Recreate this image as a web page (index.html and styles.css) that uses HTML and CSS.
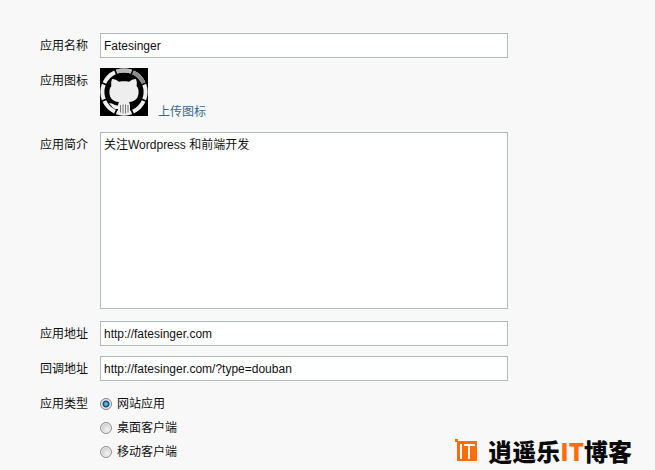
FILE: index.html
```
<!DOCTYPE html>
<html lang="zh-CN">
<head>
<meta charset="utf-8">
<title>应用设置</title>
<link rel="stylesheet" href="styles.css">
</head>
<body>
<form class="app-form">
  <div class="row">
    <label class="label" for="name">应用名称</label>
    <input class="field" id="name" type="text" value="Fatesinger">
  </div>
  <div class="row">
    <span class="label">应用图标</span>
    <div class="icon-group">
      <svg class="app-icon" viewBox="0 0 48 48" aria-hidden="true">
        <rect width="48" height="48" fill="#000"/>
        <g fill="none" stroke-width="4">
          <circle cx="24" cy="24" r="21.6" stroke="#eee" pathLength="80" stroke-dasharray="9 1" stroke-dashoffset="-5.5"/>
          <path d="M17 3.600a21.600 21.600 0 0 1 14 0" stroke="#bbb"/>
          <path d="M33.200 4.500A21.600 21.600 0 0 1 43.600 15" stroke="#888"/>
        </g>
        <path fill="#eee" d="M12 11c3 0 5 1.200 7 2.700 3.200-.6 6.800-.6 10 0 2-1.500 4-2.700 7-2.700 1 2.500 1 4.500.6 7 1.500 1.800 2 3.500 2 6 0 6.500-3.600 9.500-9.600 10 .6 1 1 2 1 4v8.500q-6 2-12 0V41c-5.500.8-6-3.500-9-5.500 4-.8 4.500 2.500 9 2 .2-1.500.4-2.500 1-3.500-6-.5-9.600-3.500-9.600-10 0-2.500.5-4.200 2-6-.4-2.500-.4-4.500.6-7z"/>
        <path d="M20.500 37v7.500M23 36.500v9M25.500 36.500v9M28 37v7.500" stroke="#777" fill="none"/>
      </svg>
      <a class="upload" href="#">上传图标</a>
    </div>
  </div>
  <div class="row row-intro">
    <label class="label" for="intro">应用简介</label>
    <textarea class="field intro" id="intro">关注Wordpress 和前端开发</textarea>
  </div>
  <div class="row">
    <label class="label" for="url">应用地址</label>
    <input class="field" id="url" type="text" value="http://fatesinger.com">
  </div>
  <div class="row">
    <label class="label" for="callback">回调地址</label>
    <input class="field" id="callback" type="text" value="http://fatesinger.com/?type=douban">
  </div>
  <div class="row" role="radiogroup" aria-labelledby="type-label">
    <span class="label" id="type-label">应用类型</span>
    <div class="options">
      <label class="option"><input class="radio" type="radio" name="type" checked>网站应用</label>
      <label class="option"><input class="radio" type="radio" name="type">桌面客户端</label>
      <label class="option"><input class="radio" type="radio" name="type">移动客户端</label>
    </div>
  </div>
</form>
<div class="brand">
  <svg class="brand-mark" viewBox="0 0 24 24" aria-hidden="true">
    <path fill="#ff6c0a" d="M0 0h3v3H0zM2 2h20v20H2z"/>
    <path fill="none" stroke="#fff" stroke-width="2" d="M6 5v15M9 6h11M14 6v14"/>
  </svg>
  <span class="brand-name">逍遥乐<span class="brand-it">IT</span>博客</span>
</div>
</body>
</html>
```
FILE: styles.css
```
* {
  box-sizing: border-box;
}

body {
  margin: 0;
  background: #f8f8f8;
  color: #111;
  font: 12px/24px "Liberation Sans", "Noto Sans CJK SC", sans-serif;
}

.app-form {
  display: flex;
  flex-direction: column;
  gap: 10px;
  padding: 33px 24px 0 40px;
}

.row {
  display: grid;
  grid-template-columns: 48px minmax(0, 408px);
  column-gap: 12px;
  align-items: start;
}

.row-intro {
  margin: 6px 0 2px;
}

.label {
  padding-top: 1px;
  white-space: nowrap;
}

.field {
  display: block;
  width: 100%;
  height: 25px;
  margin: 0;
  padding: 0 3px;
  border: 1px solid #b4bbbd;
  border-radius: 0;
  background: #fff;
  color: #111;
  font: inherit;
  outline: 0;
}

.intro {
  height: 177px;
  resize: none;
}

.icon-group {
  display: flex;
  align-items: flex-end;
  gap: 10px;
}

.app-icon {
  width: 48px;
  height: 48px;
}

.upload {
  color: #336b94;
  line-height: 8px;
  text-decoration: none;
}

.options {
  display: flex;
  flex-direction: column;
  padding-top: 1px;
}

.option {
  display: flex;
  align-items: center;
  gap: 5px;
}

.radio {
  appearance: none;
  width: 12px;
  height: 12px;
  margin: 0;
  border: 1px solid #929292;
  border-radius: 50%;
  background: radial-gradient(circle at 65% 65%, #f4f4f4, #bdbdbd);
  box-shadow: inset 0 0 0 1px #eee;
}

.radio:checked {
  border-color: #748494;
  background: radial-gradient(circle, #58bce8 0 1px, #123e68 3px, #e4eaf0 4px);
}

.brand {
  position: absolute;
  right: 23px;
  bottom: 5px;
  display: flex;
  align-items: center;
  gap: 9px;
}

.brand-mark {
  width: 24px;
  height: 24px;
}

.brand-name {
  color: #0a0a0a;
  font: 900 24px/28px "Noto Sans CJK SC", sans-serif;
  white-space: nowrap;
}

.brand-it {
  color: #ff6c0a;
}
```
